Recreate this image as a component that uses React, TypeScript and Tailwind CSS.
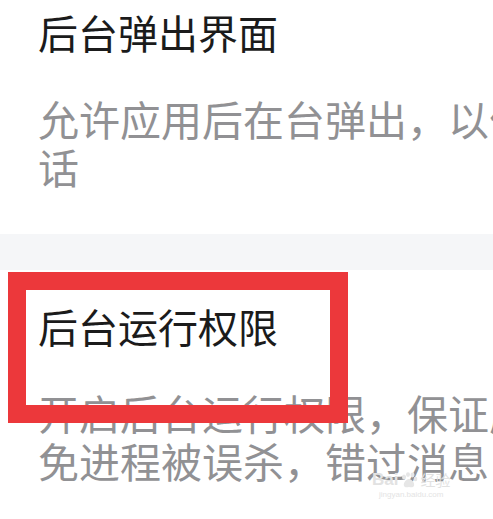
const cjk = "font-['Noto_Sans_CJK_SC','Noto_Sans',sans-serif]";

function SettingItem({
  title,
  lines,
  top,
  bottom,
}: {
  title: string;
  lines: string[];
  top: string;
  bottom: string;
}) {
  return (
    <div className={`px-[38px] ${top} ${bottom}`}>
      <div className="whitespace-nowrap text-[40px] leading-[48px] text-[#1b1b1b]">{title}</div>
      <div className="mt-[38px] text-[41px] leading-[48px] text-[#919194]">
        {lines.map((l) => (
          <div key={l} className="whitespace-nowrap">
            {l}
          </div>
        ))}
      </div>
    </div>
  );
}

function Watermark() {
  return (
    <div className="absolute left-[372px] top-[470px] flex flex-col items-center text-[#e2e2e2]">
      <div className="flex items-center gap-[2px] font-['Liberation_Sans',sans-serif] text-[17px] font-bold leading-[20px]">
        <span>Bai</span>
        <svg width="18" height="16" viewBox="0 0 18 16" fill="#e6e6e6">
          <ellipse cx="4" cy="5" rx="2" ry="2.6" />
          <ellipse cx="8" cy="2.6" rx="2" ry="2.4" />
          <ellipse cx="12.5" cy="3" rx="2" ry="2.4" />
          <ellipse cx="15.5" cy="7" rx="1.8" ry="2.2" />
          <path d="M9 7c-3 0-6 4-5 7 1 2 4 1 5 1s4 1 5-1c1-3-2-7-5-7z" />
        </svg>
        <span className={`${cjk} text-[15px] font-normal`}>经验</span>
      </div>
      <div className="font-['Liberation_Sans',sans-serif] text-[8px] leading-[10px] text-[#e4e4e4]">
        jingyan.baidu.com
      </div>
    </div>
  );
}

export default function App() {
  return (
    <div className={`relative h-[519px] w-[493px] overflow-hidden bg-white ${cjk}`}>
      <SettingItem
        title="后台弹出界面"
        lines={["允许应用后在台弹出，以便接听来电和视频通", "话"]}
        top="pt-[8px]"
        bottom="pb-[44px]"
      />
      <div className="h-[36px] bg-[#f5f6f8]" />
      <SettingItem
        title="后台运行权限"
        lines={["开启后台运行权限，保证应用正常运行，避", "免进程被误杀，错过消息"]}
        top="pt-[32px]"
        bottom="pb-[20px]"
      />
      <div className="absolute left-[8px] top-[272px] h-[151px] w-[340px] border-[18px] border-[#ec383b]" />
      <Watermark />
    </div>
  );
}
